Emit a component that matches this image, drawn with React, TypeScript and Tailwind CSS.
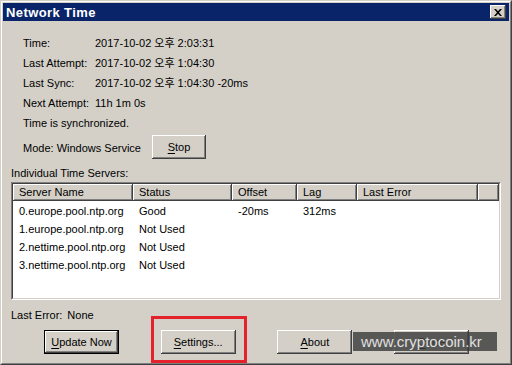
import React from "react";

type Col = { label: string; w: string };

const columns: Col[] = [
  { label: "Server Name", w: "w-[120px]" },
  { label: "Status", w: "w-[99px]" },
  { label: "Offset", w: "w-[65px]" },
  { label: "Lag", w: "w-[60px]" },
  { label: "Last Error", w: "w-[121px]" },
];

const servers = [
  ["0.europe.pool.ntp.org", "Good", "-20ms", "312ms", ""],
  ["1.europe.pool.ntp.org", "Not Used", "", "", ""],
  ["2.nettime.pool.ntp.org", "Not Used", "", "", ""],
  ["3.nettime.pool.ntp.org", "Not Used", "", "", ""],
];

const info = [
  ["Time:", "2017-10-02 오후 2:03:31"],
  ["Last Attempt:", "2017-10-02 오후 1:04:30"],
  ["Last Sync:", "2017-10-02 오후 1:04:30 -20ms"],
  ["Next Attempt:", "11h 1m 0s"],
];

const bevel =
  "shadow-[inset_-1px_-1px_#404040,inset_1px_1px_#ffffff,inset_-2px_-2px_#808080,inset_2px_2px_#d4d0c8]";

const WinButton = ({
  hot,
  rest,
  isDefault,
  className = "",
}: {
  hot: string;
  rest: string;
  isDefault?: boolean;
  className?: string;
}) => (
  <div
    className={`h-[24px] w-[75px] bg-[#d4d0c8] ${
      isDefault ? "border border-black" : ""
    } ${className}`}
  >
    <div
      className={`flex h-full w-full items-center justify-center ${bevel}`}
    >
      <span>
        <span className="underline underline-offset-2">{hot}</span>
        {rest}
      </span>
    </div>
  </div>
);

export default function App() {
  return (
    <div
      className="relative h-[365px] w-[512px] overflow-hidden bg-[#d4d0c8] text-[11px] leading-none text-black"
      style={{ fontFamily: '"Liberation Sans", "Noto Sans CJK KR", sans-serif' }}
    >
      {/* window frame */}
      <div className="h-full w-full border border-t-[#d4d0c8] border-l-[#d4d0c8] border-r-[#404040] border-b-[#404040]">
        <div className="flex h-full w-full flex-col border border-t-white border-l-white border-r-[#808080] border-b-[#808080] p-px">
          {/* title bar */}
          <div className="flex h-[18px] shrink-0 items-center justify-between bg-[#0a246a] pl-[3px] pr-[3px]">
            <span className="text-[13px] font-bold tracking-[0.4px] text-white">
              Network Time
            </span>
            <div className={`flex h-[14px] w-[16px] items-center justify-center bg-[#d4d0c8] ${bevel}`}>
              <svg width="8" height="7" viewBox="0 0 8 7">
                <path d="M0 0h2l2 2.3L6 0h2L5 3.5 8 7H6L4 4.7 2 7H0l3-3.5z" fill="#000" />
              </svg>
            </div>
          </div>

          {/* status info */}
          <div className="flex flex-col pl-[20px] pt-[12px]">
            {info.map(([k, v]) => (
              <div key={k} className="flex h-[20px] items-center">
                <span className="w-[72px]">{k}</span>
                <span>{v}</span>
              </div>
            ))}
            <div className="flex h-[20px] items-center">Time is synchronized.</div>
            <div className="mt-[2px] flex h-[24px] items-center gap-[11px]">
              <span className="pt-[2px]">Mode: Windows Service</span>
              <WinButton hot="S" rest="top" className="!w-[54px]" />
            </div>
          </div>

          <div className="mt-[7px] flex h-[14px] items-center pl-[8px]">
            Individual Time Servers:
          </div>

          {/* list view */}
          <div className="mx-[8px] mt-[2px] h-[118px] border border-t-[#808080] border-l-[#808080] border-r-white border-b-white">
            <div className="flex h-full flex-col border border-t-[#404040] border-l-[#404040] border-r-[#d4d0c8] border-b-[#d4d0c8] bg-white">
              <div className="flex h-[17px] shrink-0">
                {columns.map((c) => (
                  <div
                    key={c.label}
                    className={`flex h-full items-center bg-[#d4d0c8] pl-[6px] ${c.w} ${bevel}`}
                  >
                    {c.label}
                  </div>
                ))}
                <div className={`h-full flex-1 bg-[#d4d0c8] ${bevel}`} />
              </div>
              <div className="flex flex-col pt-px">
                {servers.map((row) => (
                  <div key={row[0]} className="flex h-[18px] items-center">
                    {row.map((cell, i) => (
                      <span key={i} className={`pl-[6px] ${columns[i].w}`}>
                        {cell}
                      </span>
                    ))}
                  </div>
                ))}
              </div>
            </div>
          </div>

          <div className="mt-[8px] flex h-[14px] items-center pl-[8px]">
            Last Error:<span className="ml-[5px]">None</span>
          </div>

          {/* buttons */}
          <div className="mt-[8px] flex gap-[41.7px] pl-[41px]">
            <WinButton hot="U" rest="pdate Now" isDefault />
            <WinButton hot="S" rest="ettings..." />
            <WinButton hot="A" rest="bout" />
            <WinButton hot="C" rest="lose" />
          </div>
        </div>
      </div>

      {/* red highlight annotation */}
      <div className="absolute left-[151px] top-[316px] h-[47px] w-[96px] border-[3px] border-[#e5212b]" />

      {/* watermark */}
      <div
        className="absolute left-[353px] top-[332px] flex h-[19px] w-[144px] items-center bg-[rgba(60,60,60,0.82)] pl-[8px] text-[15px] text-[#e0e0e0]"
      >
        www.cryptocoin.kr
      </div>
    </div>
  );
}
